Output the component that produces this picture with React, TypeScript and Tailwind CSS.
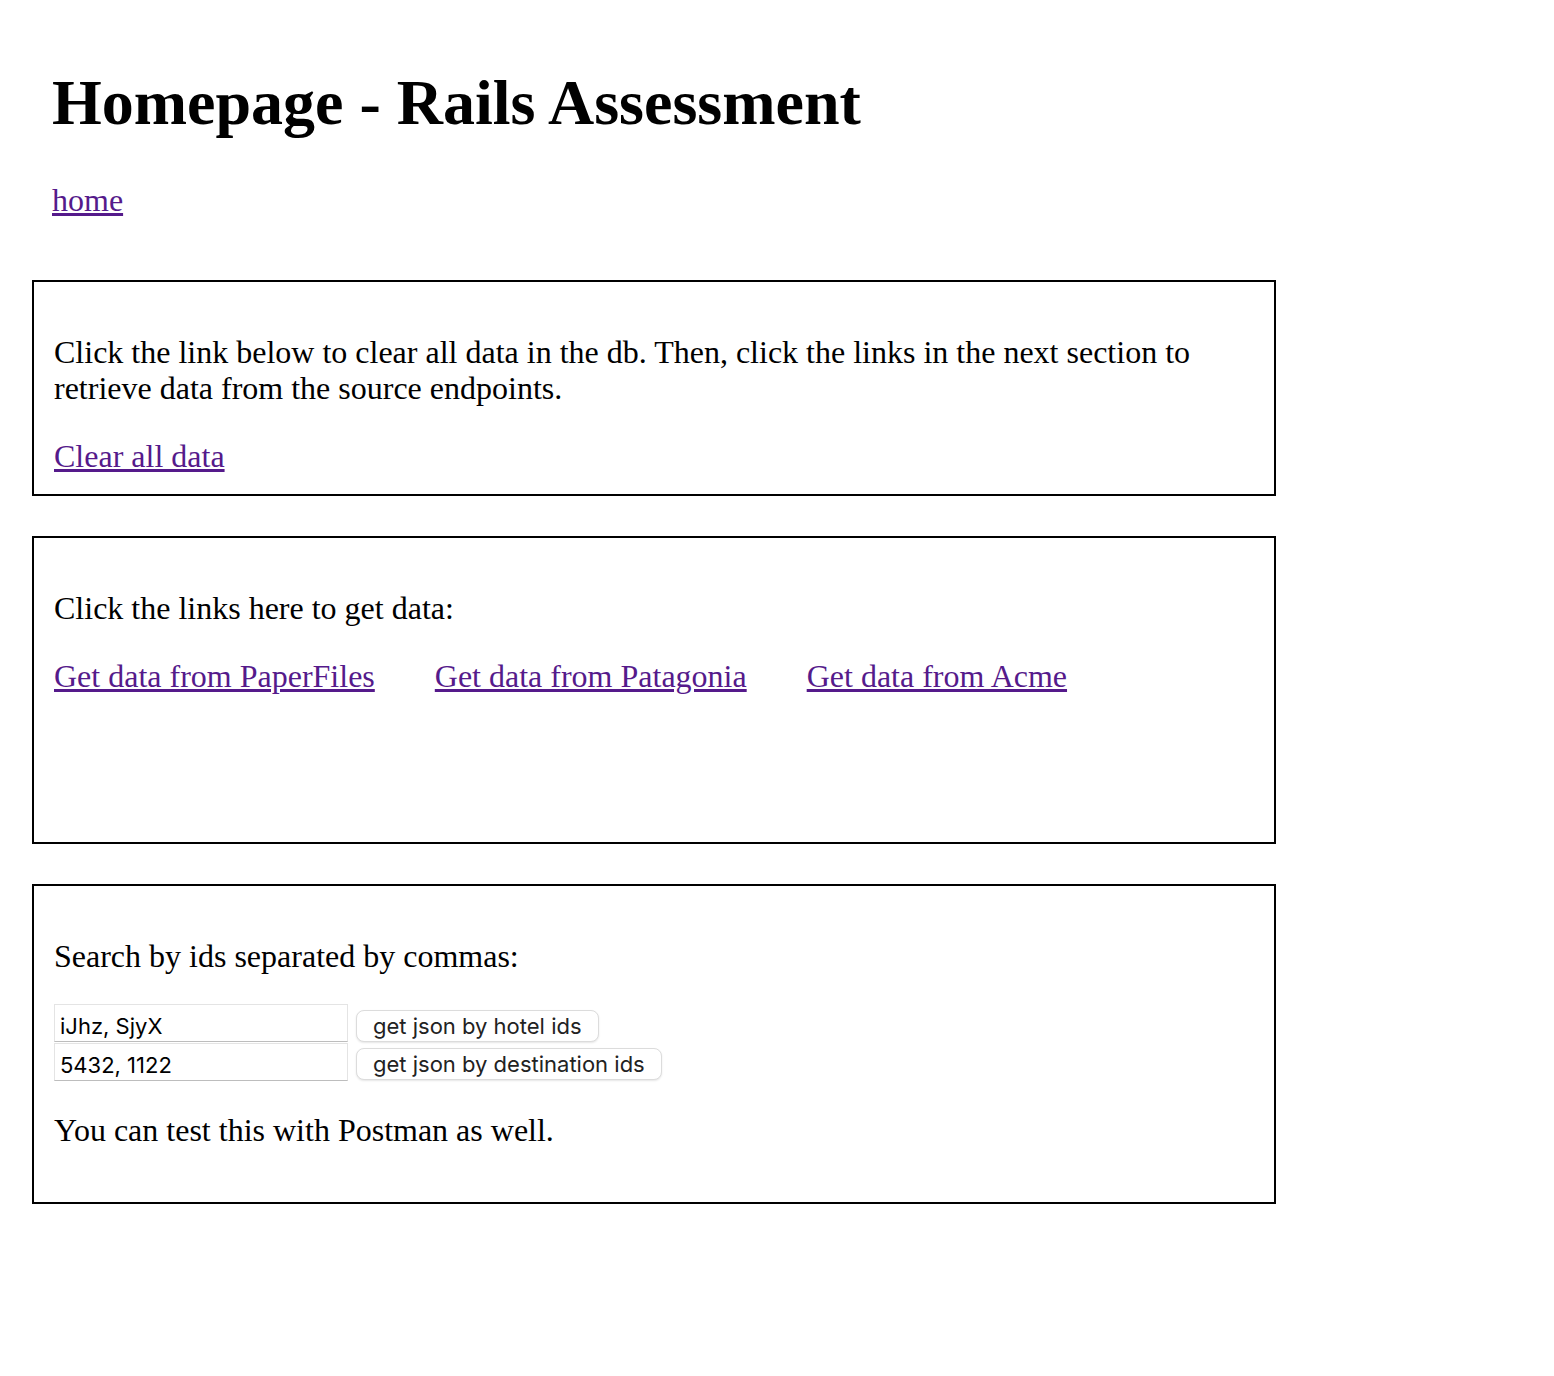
export default function App() {
  const serif = { fontFamily: '"Liberation Serif", "Times New Roman", serif' };
  const link = "text-[#551a8b] underline";
  return (
    <div className="min-h-[1376px] bg-white text-black text-[32px] leading-[36px] px-[32px] pt-[66px]" style={serif}>
      <div className="px-[20px]">
        <h1 className="text-[64px] leading-[74px] font-bold">Homepage - Rails Assessment</h1>
        <div className="mt-[42px]">
          <a href="#" className={link}>home</a>
        </div>
      </div>

      <div className="mt-[62px] w-[1244px] border-2 border-black px-[20px] pt-[52px] pb-[20px]">
        <p>
          Click the link below to clear all data in the db. Then, click the links in the next section to retrieve data from the source endpoints.
        </p>
        <div className="mt-[32px]">
          <a href="#" className={link}>Clear all data</a>
        </div>
      </div>

      <div className="mt-[40px] w-[1244px] h-[308px] border-2 border-black px-[20px] pt-[52px]">
        <p>Click the links here to get data:</p>
        <div className="mt-[32px] flex gap-[60px]">
          <a href="#" className={link}>Get data from PaperFiles</a>
          <a href="#" className={link}>Get data from Patagonia</a>
          <a href="#" className={link}>Get data from Acme</a>
        </div>
      </div>

      <div className="mt-[40px] w-[1244px] border-2 border-black px-[20px] pt-[52px] pb-[54px]">
        <p>Search by ids separated by commas:</p>
        <div className="mt-[30px] flex flex-col gap-[1px] text-[22px] leading-[28px]" style={{ fontFamily: 'Inter, "Liberation Sans", sans-serif' }}>
          <div className="flex items-end gap-[8px]">
            <input
              defaultValue="iJhz, SjyX"
              className="w-[294px] h-[38px] px-[5px] pt-[6px] border border-[#e4e4e4] border-b-[#bdbdbd] outline-none text-black"
            />
            <button className="h-[32px] px-[16px] rounded-[8px] bg-white border border-[#dcdcdc] shadow-[0_1px_2px_rgba(0,0,0,0.10)] text-[#222]">
              get json by hotel ids
            </button>
          </div>
          <div className="flex items-end gap-[8px]">
            <input
              defaultValue="5432, 1122"
              className="w-[294px] h-[38px] px-[5px] pt-[6px] border border-[#e4e4e4] border-b-[#bdbdbd] outline-none text-black"
            />
            <button className="h-[32px] mb-[1px] px-[16px] rounded-[8px] bg-white border border-[#dcdcdc] shadow-[0_1px_2px_rgba(0,0,0,0.10)] text-[#222]">
              get json by destination ids
            </button>
          </div>
        </div>
        <p className="mt-[31px]">You can test this with Postman as well.</p>
      </div>
    </div>
  );
}
